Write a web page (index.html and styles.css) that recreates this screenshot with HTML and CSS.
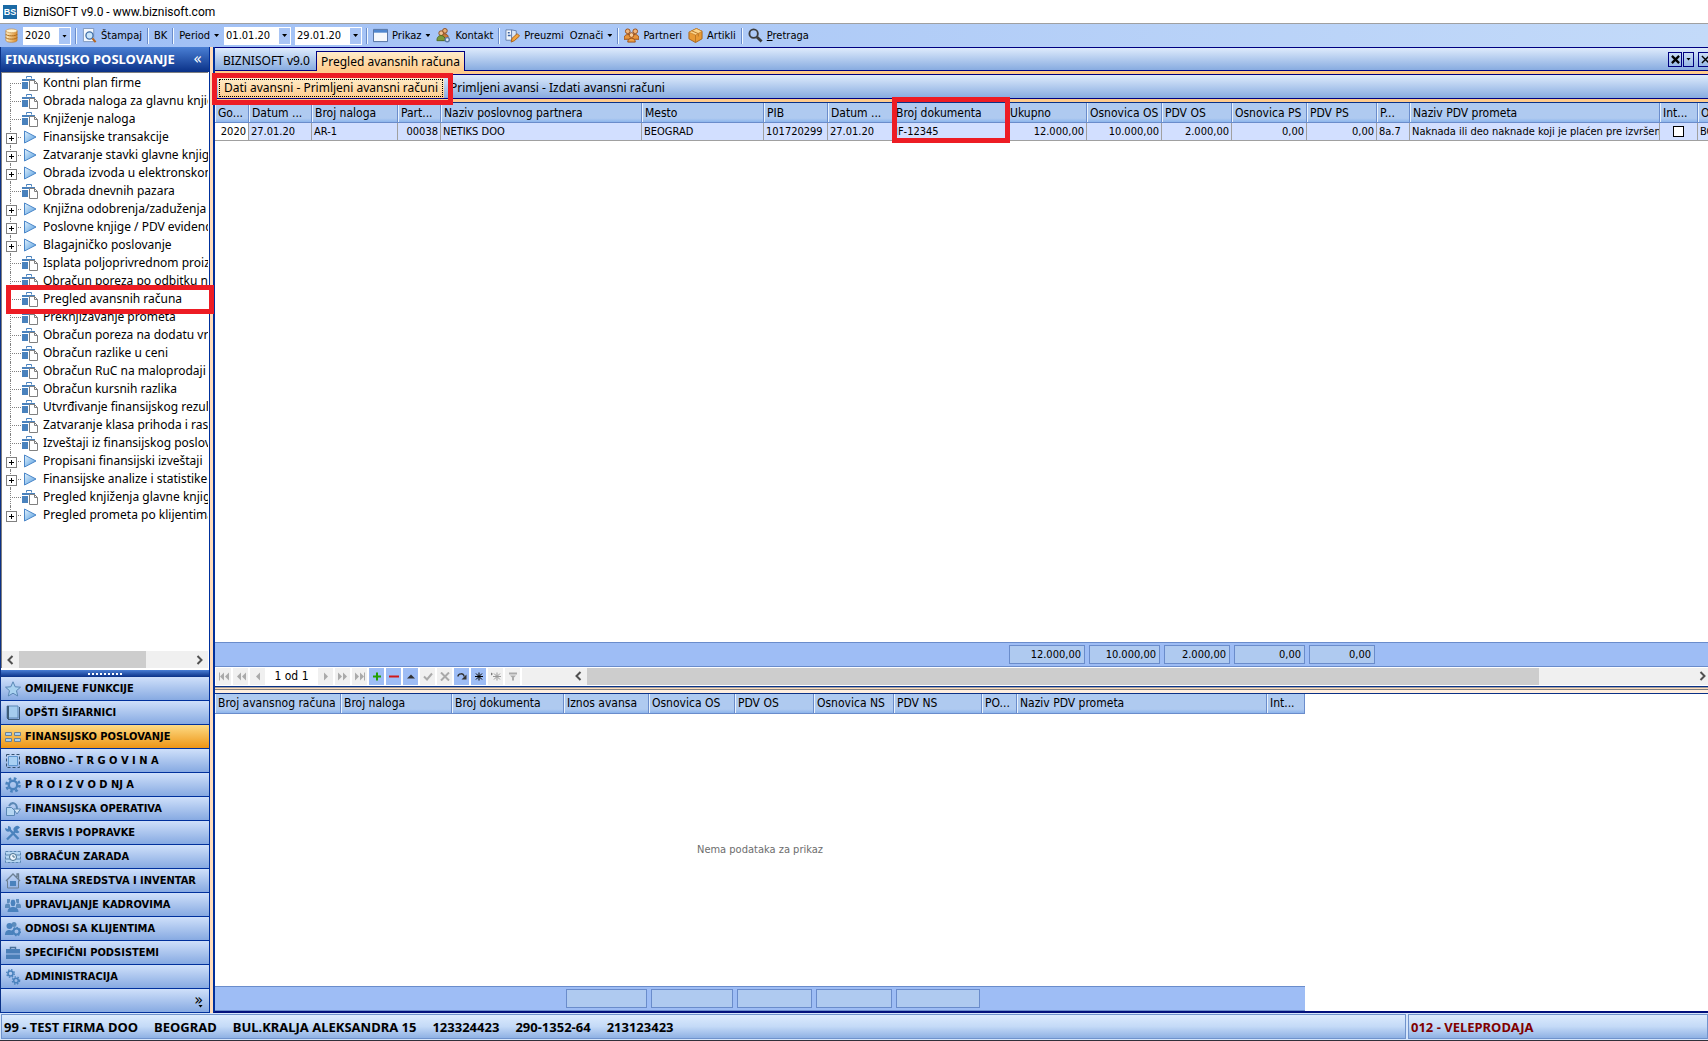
FILE: index.html
```html
<!DOCTYPE html>
<html lang="sr">
<head>
    <meta charset="UTF-8">
    <meta name="viewport" content="width=device-width, initial-scale=1.0">
    <title>BizniSOFT v9.0 - www.biznisoft.com</title>
    <link rel="stylesheet" href="styles.css">
</head>
<body>
    <svg class="defs" aria-hidden="true">
        <defs>
            <linearGradient id="blue" x1="0" y1="0" x2="1" y2="1">
                <stop offset="0" stop-color="#e4f2fc"/>
                <stop offset="1" stop-color="#4f9be0"/>
            </linearGradient>
            <linearGradient id="gold" x1="0" y1="0" x2="1" y2="0">
                <stop offset="0" stop-color="#fff0c4"/>
                <stop offset="1" stop-color="#d98a2b"/>
            </linearGradient>
        </defs>
        <!-- tree -->
        <symbol id="i-doc" viewBox="0 0 16 16">
            <path d="M4.500 3.500V1.500h5v2" fill="none" stroke="#4a82bd"/>
            <path d="M0 4h13v2H0zM0 7h6v7H0z" fill="#4a82bd"/>
            <path d="M7.500 5.500h5l3 3v7h-8z" fill="#fff" stroke="#808080"/>
            <path d="M12.500 5.500v3h3" fill="none" stroke="#808080"/>
        </symbol>
        <symbol id="i-play" viewBox="0 0 16 16">
            <path d="M2.500 2v12L14 8z" fill="url(#blue)" stroke="#4a86c8"/>
        </symbol>
        <!-- toolbar -->
        <symbol id="i-db" viewBox="0 0 16 16">
            <path d="M2 3v10c0 3 12 3 12 0V3z" fill="url(#gold)" stroke="#b57a35" stroke-width=".7"/>
            <ellipse cx="8" cy="3" rx="6" ry="2" fill="#fff3cf" stroke="#c98f45" stroke-width=".7"/>
            <path d="M2 6.500c0 2.500 12 2.500 12 0M2 10c0 2.500 12 2.500 12 0" fill="none" stroke="#a86518"/>
        </symbol>
        <symbol id="i-preview" viewBox="0 0 16 16">
            <path d="M1.500.5h11v14h-11z" fill="#f4f8fd" stroke="#7f98bd"/>
            <circle cx="8" cy="8" r="3.800" fill="#cbe6fb" stroke="#3f6ea8" stroke-width="1.400"/>
            <path d="M11 11l3.500 4" stroke="#b8651e" stroke-width="2.200"/>
        </symbol>
        <symbol id="i-window" viewBox="0 0 16 16">
            <path d="M.5 1.500h15v13H.5z" fill="#f5f8fc" stroke="#4d6c9c"/>
            <path d="M1 2h14v3H1z" fill="#4f86cf"/>
        </symbol>
        <symbol id="i-contact" viewBox="0 0 16 16">
            <circle cx="9.500" cy="3" r="2.500" fill="#e7b07a" stroke="#8a4b1c"/>
            <path d="M5 9c1-4 8-4 8 1v3H6z" fill="#c87a3a" stroke="#8a4b1c"/>
            <circle cx="5.500" cy="5.500" r="2.500" fill="#f0c294" stroke="#8a4b1c"/>
            <path d="M1 13.500c0-4 2-5.500 4.500-5.500s4.500 2 4.500 5.500z" fill="#7a9a3c" stroke="#4d6b22"/>
            <circle cx="12" cy="12.500" r="2.200" fill="#dfe9f5" stroke="#5b7ca8" stroke-width="1.500"/>
        </symbol>
        <symbol id="i-fetch" viewBox="0 0 16 16">
            <path d="M1 2h6v11H1z" fill="#f4f8fd" stroke="#6580ad"/>
            <path d="M7 2l5 1v7l-5 4z" fill="#d9e6f7" stroke="#6580ad"/>
            <path d="M3 5h2M3 8h3" stroke="#3c62a0" stroke-width="1.500"/>
            <path d="M6.500 15l1-4 5.500-5 2.500 2.500-5.500 5z" fill="#f4a63d" stroke="#a8601b"/>
        </symbol>
        <symbol id="i-partners" viewBox="0 0 16 16">
            <circle cx="4" cy="3.500" r="2.500" fill="#f0b57c" stroke="#9a4d14"/>
            <circle cx="12" cy="3.500" r="2.500" fill="#f0b57c" stroke="#9a4d14"/>
            <path d="M0 12c0-4 2-5 4-5h8c2 0 4 1 4 5z" fill="#e7953d" stroke="#9a4d14"/>
            <circle cx="8" cy="7.500" r="2.500" fill="#f7cc9c" stroke="#9a4d14"/>
            <path d="M4 15c0-3 2-4 4-4s4 1 4 4z" fill="#f0a24a" stroke="#9a4d14"/>
        </symbol>
        <symbol id="i-box" viewBox="0 0 16 16">
            <path d="M1 4.500l8-4 6 3v8l-7 4-7-4z" fill="#e89a35" stroke="#a5631b"/>
            <path d="M1 4.500l7 3 7-4-6-3z" fill="#fbd58c" stroke="#c07c2a" stroke-width=".7"/>
            <path d="M8 7.500v8M4 3l7 3v3" fill="none" stroke="#b87424"/>
        </symbol>
        <symbol id="i-search" viewBox="0 0 16 16">
            <circle cx="6" cy="6" r="4.500" fill="none" stroke="#3d3d3d" stroke-width="2"/>
            <path d="M9.500 9.500l5 5" stroke="#3d3d3d" stroke-width="3"/>
        </symbol>
        <!-- modules -->
        <symbol id="n-star" viewBox="0 0 16 16">
            <path d="M8 .8l2.200 5 5.300.4-4 3.500 1.200 5.300L8 12.200 3.300 15l1.200-5.300-4-3.500 5.300-.4z" fill="#a9d2f0" stroke="#5a87b5"/>
        </symbol>
        <symbol id="n-book" viewBox="0 0 16 16">
            <path d="M2 1h11v12H2z" fill="#a4ccee" stroke="#5a87b5"/>
            <path d="M2 1h2v13H2z" fill="#3c5a78"/>
            <path d="M3 14.500h11.500V2" fill="none" stroke="#3c5a78"/>
        </symbol>
        <symbol id="n-tiles" viewBox="0 0 16 16">
            <path d="M.5 3.500h6v3h-6zM9.500 3.500h6v3h-6zM.5 9.500h6v3h-6zM9.500 9.500h6v3h-6z" fill="#a8d0f0" stroke="#6c8194"/>
        </symbol>
        <symbol id="n-select" viewBox="0 0 16 16">
            <path d="M1.500 1.500h13v13h-13z" fill="none" stroke="#33506e" stroke-dasharray="3 2"/>
            <path d="M3.500 3.500h9v9h-9z" fill="#a9d0f3" stroke="#5d95cd"/>
        </symbol>
        <symbol id="n-gear" viewBox="0 0 16 16">
            <circle cx="8" cy="8" r="6.500" fill="none" stroke="#4a82bd" stroke-width="2.600" stroke-dasharray="2.600 2.500"/>
            <circle cx="8" cy="8" r="4.200" fill="none" stroke="#4a82bd" stroke-width="2.400"/>
        </symbol>
        <symbol id="n-flow" viewBox="0 0 16 16">
            <path d="M1.500 6.500h5l3 3v5h-8z" fill="#b5d6f2" stroke="#5a87b5"/>
            <path d="M4 5c3-5 8-3 8 3" fill="none" stroke="#5a87b5" stroke-width="2"/>
            <path d="M8.500 8h7L12 13z" fill="#d4e6f7" stroke="#5a87b5"/>
        </symbol>
        <symbol id="n-tools" viewBox="0 0 16 16">
            <path d="M2 14.500L12 4.500M4.500 4.500l9 9.500" stroke="#4a82bd" stroke-width="2.400"/>
            <path d="M15 2.500a3.500 3.500 0 1 0-.5 4.500L12 5z" fill="#4a82bd"/>
            <path d="M0 3l3 1V1c3 0 4 3 2 5S0 6 0 3z" fill="#4a82bd"/>
        </symbol>
        <symbol id="n-money" viewBox="0 0 16 16">
            <path d="M.5 2.500h15v11H.5z" fill="#b5d6f2" stroke="#5a87b5" stroke-dasharray="3 1"/>
            <path d="M1 6h14M1 10h14" stroke="#5a87b5"/>
            <circle cx="8" cy="8" r="3.500" fill="#eef6fd" stroke="#47708f"/>
            <path d="M8 6v2h2" fill="none" stroke="#47708f"/>
        </symbol>
        <symbol id="n-house" viewBox="0 0 16 16">
            <path d="M1 8l7-7 7 7M12 4V1h1.500v5" fill="none" stroke="#6b7f93" stroke-width="1.300"/>
            <path d="M2.500 7.500v7.500h11V7.500" fill="none" stroke="#6b7f93"/>
            <path d="M5 8h6v5H5z" fill="#4a82bd"/>
        </symbol>
        <symbol id="n-people" viewBox="0 0 16 16">
            <path d="M2 2h3v4H2zM11 2h3v4h-3zM0 9c0-3 5-3 5-1v3H0zM11 8c0-2 5-2 5 1v2h-5z" fill="#5c8cbd"/>
            <ellipse cx="8" cy="6" rx="3" ry="4" fill="#4a82bd" stroke="#b9d1f2"/>
            <path d="M2.500 15c0-4 3-5 5.500-5s5.500 1 5.500 5z" fill="#4a82bd"/>
        </symbol>
        <symbol id="n-client" viewBox="0 0 16 16">
            <circle cx="9" cy="3.500" r="2.500" fill="#5c8cbd"/>
            <circle cx="4.500" cy="5" r="3" fill="#4a82bd"/>
            <path d="M0 14c0-4 2-5 4.500-5L8 10v4z" fill="#4a82bd"/>
            <circle cx="11.500" cy="10.500" r="3" fill="none" stroke="#4a82bd" stroke-width="2"/>
            <circle cx="11.500" cy="10.500" r="4.200" fill="none" stroke="#4a82bd" stroke-width="1.200" stroke-dasharray="1.600 1.600"/>
        </symbol>
        <symbol id="n-case" viewBox="0 0 16 16">
            <path d="M5.500 4V2.500h5V4" fill="none" stroke="#4a7099" stroke-width="1.400"/>
            <path d="M1 4h14v4.500H1zM1 9.500h14V14H1z" fill="#4a7fb8"/>
        </symbol>
        <symbol id="n-gears" viewBox="0 0 16 16">
            <circle cx="5.500" cy="4.500" r="2.500" fill="none" stroke="#4a82bd" stroke-width="1.600"/>
            <circle cx="5.500" cy="4.500" r="3.800" fill="none" stroke="#4a82bd" stroke-width="1.400" stroke-dasharray="1.500 1.500"/>
            <circle cx="11" cy="11.500" r="2.300" fill="none" stroke="#4a82bd" stroke-width="1.600"/>
            <circle cx="11" cy="11.500" r="3.600" fill="none" stroke="#4a82bd" stroke-width="1.400" stroke-dasharray="1.500 1.500"/>
        </symbol>
        <!-- scroll arrows -->
        <symbol id="i-left" viewBox="0 0 8 10"><path d="M6.500 1L2.500 5l4 4" fill="none" stroke="#505050" stroke-width="2"/></symbol>
        <symbol id="i-right" viewBox="0 0 8 10"><path d="M1.500 1l4 4-4 4" fill="none" stroke="#505050" stroke-width="2"/></symbol>
    </svg>

    <header class="titlebar">
        <span class="logo">BS</span>
        <span>BizniSOFT v9.0 - www.biznisoft.com</span>
    </header>

    <nav class="toolbar">
        <svg class="icon"><use href="#i-db"/></svg>
        <span class="combo combo-year">
            <select aria-label="Godina"><option>2020</option></select>
            <i class="caret"></i>
        </span>
        <i class="sep"></i>
        <button><svg class="icon"><use href="#i-preview"/></svg>Štampaj</button>
        <i class="sep"></i>
        <button>BK</button>
        <i class="sep"></i>
        <button>Period<i class="caret"></i></button>
        <span class="combo">
            <input type="text" value="01.01.20" aria-label="Od datuma">
            <button class="drop" aria-label="Izaberi datum"><i class="caret"></i></button>
        </span>
        <span class="combo">
            <input type="text" value="29.01.20" aria-label="Do datuma">
            <button class="drop" aria-label="Izaberi datum"><i class="caret"></i></button>
        </span>
        <i class="sep"></i>
        <button><svg class="icon"><use href="#i-window"/></svg>Prikaz<i class="caret"></i></button>
        <button><svg class="icon"><use href="#i-contact"/></svg>Kontakt</button>
        <i class="sep"></i>
        <button><svg class="icon"><use href="#i-fetch"/></svg>Preuzmi</button>
        <button>Označi<i class="caret"></i></button>
        <i class="sep"></i>
        <button><svg class="icon"><use href="#i-partners"/></svg>Partneri</button>
        <button><svg class="icon"><use href="#i-box"/></svg>Artikli</button>
        <i class="sep"></i>
        <button><svg class="icon"><use href="#i-search"/></svg><span><u>P</u>retraga</span></button>
    </nav>

    <div class="workspace">
        <aside class="sidebar">
            <div class="sidebar-head">
                <h2>FINANSIJSKO POSLOVANJE</h2>
                <button aria-label="Sakrij">«</button>
            </div>
            <div class="tree-panel">
                <ul class="tree">
                    <li><svg><use href="#i-doc"/></svg><a href="#">Kontni plan firme</a></li>
                    <li><svg><use href="#i-doc"/></svg><a href="#">Obrada naloga za glavnu knjigu</a></li>
                    <li><svg><use href="#i-doc"/></svg><a href="#">Knjiženje naloga</a></li>
                    <li class="node"><svg><use href="#i-play"/></svg><a href="#">Finansijske transakcije</a></li>
                    <li class="node"><svg><use href="#i-play"/></svg><a href="#">Zatvaranje stavki glavne knjige</a></li>
                    <li class="node"><svg><use href="#i-play"/></svg><a href="#">Obrada izvoda u elektronskom</a></li>
                    <li><svg><use href="#i-doc"/></svg><a href="#">Obrada dnevnih pazara</a></li>
                    <li class="node"><svg><use href="#i-play"/></svg><a href="#">Knjižna odobrenja/zaduženja</a></li>
                    <li class="node"><svg><use href="#i-play"/></svg><a href="#">Poslovne knjige / PDV evidencije</a></li>
                    <li class="node"><svg><use href="#i-play"/></svg><a href="#">Blagajničko poslovanje</a></li>
                    <li><svg><use href="#i-doc"/></svg><a href="#">Isplata poljoprivrednom proizvođaču</a></li>
                    <li><svg><use href="#i-doc"/></svg><a href="#">Obračun poreza po odbitku na</a></li>
                    <li><svg><use href="#i-doc"/></svg><a href="#">Pregled avansnih računa</a></li>
                    <li><svg><use href="#i-doc"/></svg><a href="#">Preknjižavanje prometa</a></li>
                    <li><svg><use href="#i-doc"/></svg><a href="#">Obračun poreza na dodatu vrednost</a></li>
                    <li><svg><use href="#i-doc"/></svg><a href="#">Obračun razlike u ceni</a></li>
                    <li><svg><use href="#i-doc"/></svg><a href="#">Obračun RuC na maloprodaji</a></li>
                    <li><svg><use href="#i-doc"/></svg><a href="#">Obračun kursnih razlika</a></li>
                    <li><svg><use href="#i-doc"/></svg><a href="#">Utvrđivanje finansijskog rezultata</a></li>
                    <li><svg><use href="#i-doc"/></svg><a href="#">Zatvaranje klasa prihoda i rashoda</a></li>
                    <li><svg><use href="#i-doc"/></svg><a href="#">Izveštaji iz finansijskog poslovanja</a></li>
                    <li class="node"><svg><use href="#i-play"/></svg><a href="#">Propisani finansijski izveštaji</a></li>
                    <li class="node"><svg><use href="#i-play"/></svg><a href="#">Finansijske analize i statistike</a></li>
                    <li><svg><use href="#i-doc"/></svg><a href="#">Pregled knjiženja glavne knjige</a></li>
                    <li class="node"><svg><use href="#i-play"/></svg><a href="#">Pregled prometa po klijentima</a></li>
                </ul>
                <div class="scrollbar">
                    <svg class="arrow"><use href="#i-left"/></svg>
                    <div class="track"><div class="thumb thumb-tree"></div></div>
                    <svg class="arrow"><use href="#i-right"/></svg>
                </div>
            </div>
            <div class="grip"><i></i></div>
            <nav class="modules">
                <button><svg><use href="#n-star"/></svg>OMILJENE FUNKCIJE</button>
                <button><svg><use href="#n-book"/></svg>OPŠTI ŠIFARNICI</button>
                <button class="active"><svg><use href="#n-tiles"/></svg>FINANSIJSKO POSLOVANJE</button>
                <button><svg><use href="#n-select"/></svg>ROBNO - T R G O V I N A</button>
                <button><svg><use href="#n-gear"/></svg>P R O I Z V O D NJ A</button>
                <button><svg><use href="#n-flow"/></svg>FINANSIJSKA OPERATIVA</button>
                <button><svg><use href="#n-tools"/></svg>SERVIS I POPRAVKE</button>
                <button><svg><use href="#n-money"/></svg>OBRAČUN ZARADA</button>
                <button><svg><use href="#n-house"/></svg>STALNA SREDSTVA I INVENTAR</button>
                <button><svg><use href="#n-people"/></svg>UPRAVLJANJE KADROVIMA</button>
                <button><svg><use href="#n-client"/></svg>ODNOSI SA KLIJENTIMA</button>
                <button><svg><use href="#n-case"/></svg>SPECIFIČNI PODSISTEMI</button>
                <button><svg><use href="#n-gears"/></svg>ADMINISTRACIJA</button>
                <button class="more" aria-label="Još modula"><span>»</span><i class="caret"></i></button>
            </nav>
        </aside>

        <main class="content">
            <div class="tabs">
                <button class="tab">BIZNISOFT v9.0</button>
                <button class="tab active">Pregled avansnih računa</button>
                <div class="window-buttons">
                    <button aria-label="Zatvori sve"><svg viewBox="0 0 10 10"><path d="M1 1l8 8M9 1L1 9" stroke="#000" stroke-width="2.500"/></svg></button>
                    <button aria-label="Lista"><i class="caret"></i></button>
                    <button aria-label="Zatvori"><svg viewBox="0 0 10 10"><path d="M1 1l8 8M9 1L1 9" stroke="#000" stroke-width="1.500"/></svg></button>
                </div>
            </div>
            <div class="tabs subtabs">
                <button class="tab active">Dati avansni - Primljeni avansni računi</button>
                <button class="tab">Primljeni avansi - Izdati avansni računi</button>
            </div>

            <section class="grid-panel grid-main">
                <table class="grid">
                    <colgroup>
                        <col class="w34"><col class="w63"><col class="w86"><col class="w43"><col class="w201">
                        <col class="w122"><col class="w64"><col class="w65"><col class="w114"><col class="w80">
                        <col class="w75"><col class="w70"><col class="w75"><col class="w70"><col class="w33">
                        <col class="w250"><col class="w38"><col class="w80">
                    </colgroup>
                    <thead>
                        <tr>
                            <th>Go...</th><th>Datum ...</th><th>Broj naloga</th><th>Part...</th>
                            <th>Naziv poslovnog partnera</th><th>Mesto</th><th>PIB</th><th>Datum ...</th>
                            <th>Broj dokumenta</th><th>Ukupno</th><th>Osnovica OS</th><th>PDV OS</th>
                            <th>Osnovica PS</th><th>PDV PS</th><th>P...</th><th>Naziv PDV prometa</th>
                            <th>Int...</th><th>Opis</th>
                        </tr>
                    </thead>
                    <tbody>
                        <tr class="row">
                            <td class="num focused">2020</td><td>27.01.20</td><td>AR-1</td><td class="num">00038</td>
                            <td>NETIKS DOO</td><td>BEOGRAD</td><td>101720299</td><td>27.01.20</td>
                            <td>IF-12345</td><td class="num">12.000,00</td><td class="num">10.000,00</td>
                            <td class="num">2.000,00</td><td class="num">0,00</td><td class="num">0,00</td>
                            <td>8a.7</td><td>Naknada ili deo naknade koji je plaćen pre izvršenog</td>
                            <td class="check"><input type="checkbox" aria-label="Interni"></td><td>BOJAN</td>
                        </tr>
                        <tr class="filler"><td colspan="18"></td></tr>
                    </tbody>
                    <tfoot>
                        <tr>
                            <td colspan="9"></td>
                            <td><output>12.000,00</output></td>
                            <td><output>10.000,00</output></td>
                            <td><output>2.000,00</output></td>
                            <td><output>0,00</output></td>
                            <td><output>0,00</output></td>
                            <td colspan="4"></td>
                        </tr>
                    </tfoot>
                </table>
            </section>

            <div class="navigator">
                <button disabled aria-label="Prvi"><svg viewBox="0 0 10 8"><path d="M0 0h1v8H0zM5 0v8L1 4zM10 0v8L6 4z"/></svg></button>
                <button disabled aria-label="Prethodna strana"><svg viewBox="0 0 10 8"><path d="M5 0v8L1 4zM10 0v8L6 4z"/></svg></button>
                <button disabled aria-label="Prethodni"><svg viewBox="0 0 10 8"><path d="M7 0v8L3 4z"/></svg></button>
                <span class="position">1 od 1</span>
                <button disabled aria-label="Sledeći"><svg viewBox="0 0 10 8"><path d="M3 0v8l4-4z"/></svg></button>
                <button disabled aria-label="Sledeća strana"><svg viewBox="0 0 10 8"><path d="M0 0v8l4-4zM5 0v8l4-4z"/></svg></button>
                <button disabled aria-label="Poslednji"><svg viewBox="0 0 10 8"><path d="M0 0v8l4-4zM5 0v8l4-4zM9 0h1v8H9z"/></svg></button>
                <button aria-label="Dodaj"><svg viewBox="0 0 10 8"><path d="M4 0h2v3h3v2H6v3H4V5H1V3h3z" fill="#22a000"/></svg></button>
                <button aria-label="Obriši"><svg viewBox="0 0 10 8"><path d="M0 3h10v2H0z" fill="#d01818"/></svg></button>
                <button aria-label="Izmeni"><svg viewBox="0 0 10 8"><path d="M1 6l4-4 4 4z" fill="#333"/></svg></button>
                <button disabled aria-label="Potvrdi"><svg viewBox="0 0 10 8"><path d="M1 4l3 3 5-6" fill="none" stroke="#aaa" stroke-width="2"/></svg></button>
                <button disabled aria-label="Otkaži"><svg viewBox="0 0 10 8"><path d="M1 0l8 8M9 0L1 8" stroke="#aaa" stroke-width="2"/></svg></button>
                <button aria-label="Osveži"><svg viewBox="0 0 10 8"><path d="M1 4c0-3 6-4 6 0" fill="none" stroke="#333" stroke-width="1.500"/><path d="M9.500 2v5h-5z" fill="#333"/></svg></button>
                <button aria-label="Obeleži"><svg viewBox="0 0 10 8"><path d="M5 0v8M1 4h8M2 1l6 6M8 1L2 7" stroke="#000"/></svg></button>
                <button disabled aria-label="Idi na oznaku"><svg viewBox="0 0 10 8"><path d="M6 0v8M2 4h8M3 1l6 6M9 1L3 7" stroke="#999"/><path d="M0 0l2 1.500L0 3z" fill="#777"/></svg></button>
                <button disabled aria-label="Filter"><svg viewBox="0 0 10 8"><path d="M1 0h8v2H1zM2 3h6L6 5v3H4V5z"/></svg></button>
                <div class="scrollbar">
                    <svg class="arrow"><use href="#i-left"/></svg>
                    <div class="track"><div class="thumb thumb-grid"></div></div>
                    <svg class="arrow"><use href="#i-right"/></svg>
                </div>
            </div>

            <div class="splitter"></div>

            <section class="grid-panel grid-detail">
                <table class="grid">
                    <colgroup>
                        <col class="w126"><col class="w111"><col class="w112"><col class="w85"><col class="w86">
                        <col class="w79"><col class="w80"><col class="w88"><col class="w35"><col class="w250"><col class="w38">
                    </colgroup>
                    <thead>
                        <tr>
                            <th>Broj avansnog računa</th><th>Broj naloga</th><th>Broj dokumenta</th>
                            <th>Iznos avansa</th><th>Osnovica OS</th><th>PDV OS</th><th>Osnovica NS</th>
                            <th>PDV NS</th><th>PO...</th><th>Naziv PDV prometa</th><th>Int...</th>
                        </tr>
                    </thead>
                    <tbody>
                        <tr class="filler"><td colspan="11">Nema podataka za prikaz</td></tr>
                    </tbody>
                    <tfoot>
                        <tr>
                            <td colspan="3"></td>
                            <td><output></output></td>
                            <td><output></output></td>
                            <td><output></output></td>
                            <td><output></output></td>
                            <td><output></output></td>
                            <td colspan="3"></td>
                        </tr>
                    </tfoot>
                </table>
            </section>
        </main>
    </div>

    <footer class="statusbar">
        <div class="status-company">
            <span>99 - TEST FIRMA DOO</span>
            <span>BEOGRAD</span>
            <span>BUL.KRALJA ALEKSANDRA 15</span>
            <span>123324423</span>
            <span>290-1352-64</span>
            <span>213123423</span>
        </div>
        <div class="status-unit">012 - VELEPRODAJA</div>
    </footer>

    <!-- highlights for the user manual -->
    <i class="mark mark-tree"></i>
    <i class="mark mark-tab"></i>
    <i class="mark mark-column"></i>
</body>
</html>
```
FILE: styles.css
```css
* {
    box-sizing: border-box;
}

body {
    position: relative;
    margin: 0;
    height: 100vh;
    display: flex;
    flex-direction: column;
    overflow: hidden;
    background: #fff;
    color: #000;
    font-family: "DejaVu Sans Condensed", "DejaVu Sans", sans-serif;
    font-size: 12px;
    line-height: 16px;
}

button, input, select {
    margin: 0;
    padding: 0;
    border: none;
    border-radius: 0;
    background: none;
    color: inherit;
    font: inherit;
}

a {
    color: inherit;
    text-decoration: none;
}

svg {
    flex: none;
}

.defs {
    position: absolute;
    width: 0;
    height: 0;
}

.caret {
    flex: none;
    width: 5px;
    height: 3px;
    background: #000;
    clip-path: polygon(0 0, 100% 0, 50% 100%);
}

/* title bar */
.titlebar {
    flex: none;
    display: flex;
    align-items: center;
    gap: 6px;
    height: 23px;
    padding-left: 3px;
    font-family: Roboto, sans-serif;
}

.logo {
    width: 14px;
    height: 14px;
    background: #1b6aa5;
    color: #fff;
    font: bold 9px/14px "Liberation Sans", sans-serif;
    text-align: center;
}

/* toolbar */
.toolbar {
    flex: none;
    display: flex;
    align-items: center;
    gap: 4px;
    height: 24px;
    padding-left: 4px;
    border-top: 1px solid #a0a0a0;
    background: linear-gradient(to right, #9ebef5, #c3daf9);
    font-size: 11px;
}

.toolbar > button {
    display: flex;
    align-items: center;
    gap: 4px;
    height: 20px;
    padding: 0 1px;
    white-space: nowrap;
}

.icon {
    width: 15px;
    height: 15px;
}

.sep {
    width: 2px;
    height: 16px;
    border-left: 1px solid #6a8ccb;
    border-right: 1px solid #f1f9ff;
}

.combo {
    position: relative;
    display: flex;
    width: 67px;
    height: 18px;
    border: 1px solid #fff;
    background: #fff;
}

.combo-year {
    width: 48px;
}

.combo select {
    width: 100%;
    appearance: none;
    padding-left: 1px;
    background: linear-gradient(#a9c5f5, #a9c5f5) right / 11px 100% no-repeat;
}

.combo-year .caret {
    position: absolute;
    right: 3px;
    top: 7px;
    pointer-events: none;
}

.combo input {
    flex: 1;
    min-width: 0;
    padding-left: 1px;
}

.drop {
    display: flex;
    align-items: center;
    justify-content: center;
    width: 11px;
    background: #a9c5f5;
}

.workspace {
    flex: 1;
    min-height: 0;
    display: flex;
    background: #ffdcbb;
}

/* sidebar */
.sidebar {
    flex: none;
    display: flex;
    flex-direction: column;
    width: 210px;
    margin-right: 3px;
    border-left: 1px solid #0a3187;
    border-right: 1px solid #00309c;
    background: #fff;
}

.sidebar-head {
    flex: none;
    display: flex;
    align-items: center;
    justify-content: space-between;
    height: 25px;
    padding: 0 7px 2px 4px;
    background: linear-gradient(#4a7fd4, #0a3187);
    color: #fff;
}

.sidebar-head h2 {
    margin: 0;
    font: bold 13px/18px "Noto Sans", sans-serif;
    white-space: nowrap;
}

.sidebar-head button {
    font-size: 16px;
}

.tree-panel {
    flex: 1;
    min-height: 0;
    display: flex;
    flex-direction: column;
    margin-right: 1px;
    border-left: 1px solid #808080;
    border-top: 1px solid #808080;
}

.tree {
    flex: 1;
    min-height: 0;
    margin: 0;
    padding: 1px 0 0;
    overflow: hidden;
    list-style: none;
    font-family: "Noto Sans", sans-serif;
}

.tree li {
    position: relative;
    display: flex;
    align-items: center;
    gap: 5px;
    height: 18px;
    padding-left: 20px;
    white-space: nowrap;
}

/* dotted branch lines */
.tree li::before {
    content: "";
    position: absolute;
    left: 8px;
    top: 0;
    width: 11px;
    height: 18px;
    border-left: 1px dotted #808080;
    background: linear-gradient(to right, #808080 1px, transparent 1px) 1px 9px / 2px 1px repeat-x;
}

.tree li:first-child::before {
    clip-path: inset(9px 0 0 0);
}

.tree li:last-child::before {
    clip-path: inset(0 0 8px 0);
}

.tree .node::after {
    content: "";
    position: absolute;
    left: 4px;
    top: 5px;
    width: 9px;
    height: 9px;
    border: 1px solid #808080;
    background:
        linear-gradient(#000, #000) center / 5px 1px no-repeat,
        linear-gradient(#000, #000) center / 1px 5px no-repeat,
        #fff;
}

.tree svg {
    width: 16px;
    height: 16px;
}

.scrollbar {
    flex: none;
    display: flex;
    align-items: center;
    height: 17px;
    padding: 0 4px;
    background: #f0f0f0;
}

.scrollbar .arrow {
    width: 8px;
    height: 10px;
}

.track {
    flex: 1;
    height: 100%;
    margin: 0 5px;
}

.thumb {
    height: 100%;
    background: #cdcdcd;
}

.thumb-tree {
    width: 74%;
}

.thumb-grid {
    width: 86%;
}

.grip {
    flex: none;
    display: flex;
    align-items: center;
    justify-content: center;
    height: 7px;
    margin-top: 2px;
    background: linear-gradient(#4a7fd4, #0a3187);
}

.grip i {
    width: 35px;
    height: 2px;
    background: repeating-linear-gradient(to right, #fff 0 2px, transparent 2px 4px);
}

.modules {
    flex: none;
    display: flex;
    flex-direction: column;
}

.modules button {
    display: flex;
    align-items: center;
    gap: 4px;
    height: 24px;
    padding-left: 4px;
    border-bottom: 1px solid #00309c;
    background: linear-gradient(#cfe0fa, #87aae2);
    font-size: 11px;
    font-weight: bold;
    white-space: nowrap;
}

.modules .active {
    background: linear-gradient(#fddb85, #ee9515);
}

.modules svg {
    width: 16px;
    height: 16px;
}

.modules .more {
    flex-direction: column;
    align-items: flex-end;
    justify-content: center;
    gap: 0;
    padding-right: 6px;
    font-size: 16px;
    font-weight: normal;
    line-height: 11px;
}

/* right side */
.content {
    flex: 1;
    min-width: 0;
    display: flex;
    flex-direction: column;
    border-left: 2px solid #00309c;
    border-bottom: 2px solid #00107c;
    background: #fff;
}

.tabs {
    flex: none;
    display: flex;
    align-items: flex-end;
    height: 27px;
    padding: 3px 0 0 2px;
    border-top: 1px solid #000080;
    border-bottom: 3px solid #ffcb8c;
    background: linear-gradient(#deebfc, #84a9df);
    box-shadow: inset 0 -1px #000080;
    font-family: "Noto Sans", sans-serif;
}

.tab {
    height: 100%;
    padding: 0 6px;
    white-space: nowrap;
}

.tabs .active {
    padding: 0 4px;
    border: 1px solid #000080;
    border-bottom: none;
    background: linear-gradient(#ffedca, #ffcb8c);
}

.subtabs {
    height: 28px;
    padding-bottom: 1px;
}

.subtabs .active {
    margin-left: 1px;
    padding: 0 6px;
    border: none;
    outline: 1px dotted #000;
    outline-offset: -2px;
}

.window-buttons {
    display: flex;
    align-self: center;
    gap: 1px;
    margin-left: auto;
    margin-right: -4px;
    padding-bottom: 4px;
}

.window-buttons button {
    display: flex;
    align-items: center;
    justify-content: center;
    width: 14px;
    height: 15px;
    border: 1px solid #000080;
}

.window-buttons button:nth-child(2) {
    width: 11px;
    margin-right: 3px;
}

.window-buttons svg {
    width: 9px;
    height: 9px;
}

/* grids */
.grid-panel {
    overflow: hidden;
    display: grid;
    justify-items: start;
    min-height: 0;
}

.grid-main {
    flex: 565 1 0;
    border-top: 1px solid #0a3187;
}

.grid-detail {
    flex: 318 1 0;
    border-top: 1px solid #0a3187;
}

.grid {
    width: 0;
    height: 100%;
    table-layout: fixed;
    border-collapse: separate;
    border-spacing: 0;
    white-space: nowrap;
}

.grid th {
    height: 20px;
    padding: 0 3px;
    overflow: hidden;
    border-right: 1px solid #6a8ccb;
    border-bottom: 1px solid #6a8ccb;
    background: linear-gradient(#afcaf0 80%, #8db5ec);
    box-shadow: inset 1px 0 #e8f2fd;
    font-weight: normal;
    text-align: left;
}

.grid td {
    padding: 0;
}

.grid .row td {
    height: 18px;
    padding: 0 2px;
    overflow: hidden;
    border-right: 1px solid #a0a0a0;
    border-bottom: 1px solid #a0a0a0;
    background: #d2dfff;
    font-size: 11px;
}

.grid .row .num {
    text-align: right;
}

.grid .row .focused {
    background: #fff;
}

.grid .row .check {
    text-align: center;
    line-height: 0;
}

.check input {
    appearance: none;
    width: 11px;
    height: 11px;
    border: 1px solid #000;
    background: #fff;
    vertical-align: middle;
}

.grid .filler td {
    text-align: center;
    vertical-align: middle;
    color: #6d6d6d;
    font-size: 11px;
}

.grid tfoot td {
    height: 25px;
    padding: 0 2px;
    border-top: 1px solid #6a8ccb;
    border-bottom: 1px solid #6a8ccb;
    background: #9ebdf5;
}

.grid output {
    display: block;
    height: 19px;
    padding-right: 3px;
    border: 1px solid #6a8ccb;
    background: #afcaf0;
    font-size: 11px;
    line-height: 17px;
    text-align: right;
}

.w33 { width: 33px; }
.w34 { width: 34px; }
.w35 { width: 35px; }
.w38 { width: 38px; }
.w43 { width: 43px; }
.w63 { width: 63px; }
.w64 { width: 64px; }
.w65 { width: 65px; }
.w70 { width: 70px; }
.w75 { width: 75px; }
.w79 { width: 79px; }
.w80 { width: 80px; }
.w85 { width: 85px; }
.w86 { width: 86px; }
.w88 { width: 88px; }
.w111 { width: 111px; }
.w112 { width: 112px; }
.w114 { width: 114px; }
.w122 { width: 122px; }
.w126 { width: 126px; }
.w201 { width: 201px; }
.w250 { width: 250px; }

/* record navigator */
.navigator {
    flex: none;
    display: flex;
    align-items: center;
    gap: 2px;
    height: 19px;
    padding-left: 1px;
}

.navigator button {
    display: flex;
    align-items: center;
    justify-content: center;
    width: 15px;
    height: 17px;
    background: #9ebdf5;
}

.navigator button:disabled {
    background: #f0f0f0;
}

.navigator svg {
    width: 10px;
    height: 9px;
    fill: #aaa;
}

.position {
    width: 49px;
    text-align: center;
}

.navigator .scrollbar {
    flex: 1;
    padding: 0 1px 0 52px;
}

.splitter {
    flex: none;
    height: 7px;
    border-top: 1px solid #0a3187;
    background: linear-gradient(#a0a0a0 1px, #ffdcbb 1px 2px, #808080 2px 3px, #ffeede 3px);
}

/* status bar */
.statusbar {
    flex: none;
    display: flex;
    gap: 2px;
    height: 28px;
    padding: 1px 0 1px 1px;
    border-bottom: 1px solid #30303a;
    background: #d5e5fb;
    font: bold 13px/18px "Noto Sans", sans-serif;
    white-space: nowrap;
}

.statusbar > div {
    display: flex;
    align-items: center;
    padding-left: 2px;
    border: 1px solid #7093cc;
    background: linear-gradient(#dcebfd, #c4daf7 50%, #8fb1e4);
}

.status-company {
    flex: 1;
    gap: 16px;
}

.status-unit {
    flex: none;
    width: 300px;
    color: #800000;
}

/* highlight frames */
.mark {
    position: absolute;
    border: 5px solid #ed1c24;
    pointer-events: none;
}

.mark-tree {
    left: 6px;
    top: 285px;
    width: 208px;
    height: 29px;
}

.mark-tab {
    left: 212px;
    top: 73px;
    width: 241px;
    height: 32px;
}

.mark-column {
    left: 892px;
    top: 97px;
    width: 118px;
    height: 46px;
}
```
